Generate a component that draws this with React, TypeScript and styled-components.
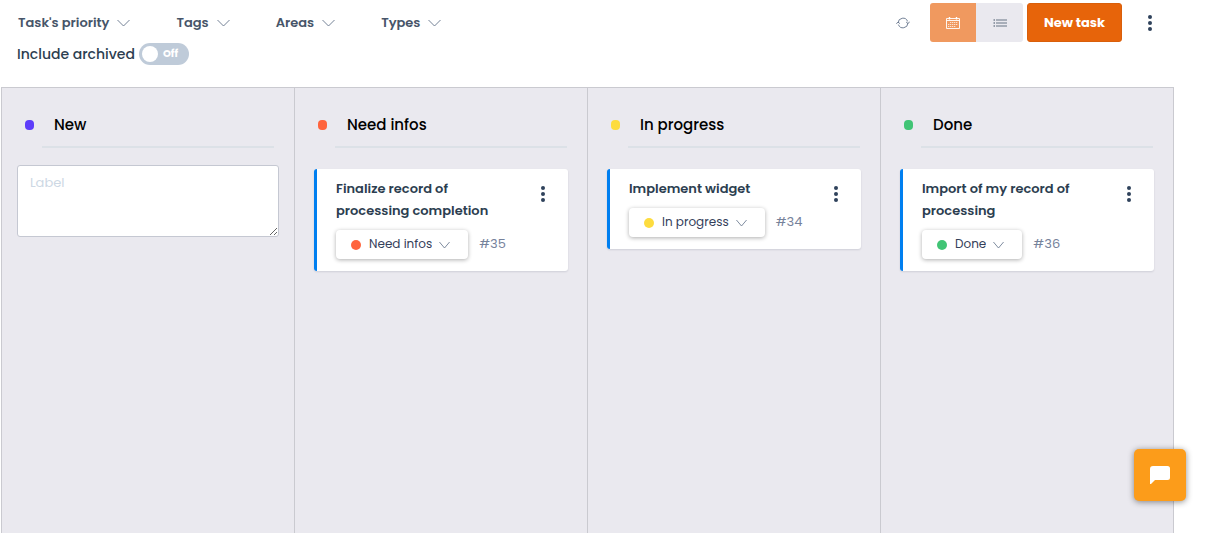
import React, { useState } from 'react';
import styled, { createGlobalStyle } from 'styled-components';

const GlobalStyle = createGlobalStyle`
  *, *::before, *::after { box-sizing: border-box; }
  body {
    margin: 0;
    background: #fff;
    color: #2c3e50;
    font-family: Poppins, Inter, "Liberation Sans", sans-serif;
    font-size: 13px;
  }
  button, select, textarea, input { font: inherit; color: inherit; }
  button { cursor: pointer; }
`;

const Page = styled.div`
  display: flex;
  flex-direction: column;
  min-height: 100vh;
  padding: 0 33px 0 1px;
`;

const Toolbar = styled.header`
  display: flex;
  justify-content: space-between;
  align-items: flex-start;
  min-height: 87px;
  padding: 3px 12px 0 16px;
`;

const FilterArea = styled.div`
  display: flex;
  flex-direction: column;
`;

const Filters = styled.nav`
  display: flex;
  align-items: center;
  gap: 45px;
  height: 39px;
`;

const FilterButton = styled.button`
  display: flex;
  align-items: center;
  gap: 8px;
  padding: 0 0 0 1px;
  border: 0;
  background: none;
  color: #475569;
  font-size: 13px;
  font-weight: 600;
  line-height: 20px;
  white-space: nowrap;
`;

const SwitchRow = styled.label`
  display: flex;
  align-items: center;
  align-self: flex-start;
  gap: 4px;
  color: #2c3e50;
  font-size: 14px;
  font-weight: 500;
  line-height: 24px;
  white-space: nowrap;
`;

const SwitchTrack = styled.span<{ $on: boolean }>`
  display: flex;
  flex-direction: ${(p) => (p.$on ? 'row-reverse' : 'row')};
  align-items: center;
  gap: 5px;
  width: 50px;
  height: 22px;
  padding: 0 3px;
  border-radius: 11px;
  background: ${(p) => (p.$on ? '#e7640a' : '#bfcbd9')};
  color: #fff;
  font-size: 10px;
  font-weight: 700;
`;

const SwitchInput = styled.input`
  appearance: none;
  width: 16px;
  height: 16px;
  margin: 0;
  border-radius: 50%;
  background: #fff;
  cursor: pointer;
`;

const Actions = styled.div`
  display: flex;
  align-items: center;
`;

const IconButton = styled.button`
  display: flex;
  align-items: center;
  justify-content: center;
  width: 24px;
  height: 24px;
  padding: 0;
  border: 0;
  background: none;
`;

const ViewSwitch = styled.div`
  display: flex;
  margin: 0 4px 0 15px;
  border-radius: 3px;
  overflow: hidden;
`;

const ViewButton = styled.button<{ $active?: boolean }>`
  display: flex;
  align-items: center;
  justify-content: center;
  width: ${(p) => (p.$active ? '46px' : '47px')};
  height: 39px;
  padding: 0;
  border: 0;
  background: ${(p) => (p.$active ? '#f0995f' : '#eae9ef')};
  color: ${(p) => (p.$active ? '#fff' : '#475569')};
`;

const NewTaskButton = styled.button`
  width: 95px;
  height: 39px;
  margin-right: 16px;
  padding: 0;
  border: 1px solid #d95f0b;
  border-radius: 3px;
  background: #e7640a;
  color: #fff;
  font-size: 13px;
  font-weight: 700;
`;

const Board = styled.main`
  display: grid;
  grid-template-columns: repeat(4, minmax(0, 1fr));
  flex: 1;
  border: solid #cacad0;
  border-width: 1px 1px 0 0;
  background: #eae9ef;
`;

const Column = styled.section`
  display: flex;
  flex-direction: column;
  border-left: 1px solid #cacad0;
  padding-top: 25px;
`;

const ColumnHead = styled.div`
  display: flex;
  align-items: center;
  gap: 20px;
  padding-left: 23px;
`;

const ColumnMark = styled.span<{ $color: string }>`
  width: 9px;
  height: 10px;
  border-radius: 4px;
  background: ${(p) => p.$color};
`;

const ColumnTitle = styled.h2`
  margin: 0;
  color: #000;
  font-size: 15px;
  font-weight: 500;
  line-height: 24px;
`;

const Rule = styled.hr`
  width: auto;
  height: 2px;
  margin: 9px 20px 21px 40px;
  border: 0;
  background: #dce1e7;
`;

const LabelField = styled.textarea`
  height: 72px;
  margin: -4px 15px 0;
  padding: 7px 12px;
  border: 1px solid #c5c8d2;
  border-radius: 3px;
  background: #fff;
  font-size: 13px;
  line-height: 20px;
  resize: vertical;
  &::placeholder { color: #cdd8e4; opacity: 1; }
`;

const Card = styled.article`
  display: flex;
  align-items: flex-start;
  justify-content: space-between;
  margin: 0 19px;
  padding: 9px 13px 12px 19px;
  border-left: 3px solid #007ff0;
  border-radius: 3px;
  background: #fff;
  box-shadow: 0 1px 2px rgba(40, 50, 80, 0.14);
`;

const CardBody = styled.div`
  display: flex;
  flex-direction: column;
  gap: 8px;
  max-width: 164px;
`;

const CardTitle = styled.h3`
  margin: 0;
  color: #2c3e50;
  font-size: 13px;
  font-weight: 600;
  line-height: 22px;
`;

const CardMeta = styled.div`
  display: flex;
  align-items: center;
  gap: 11px;
`;

const StatusBox = styled.label`
  display: flex;
  align-items: center;
  height: 29px;
  padding: 0 18px 0 15px;
  border-radius: 4px;
  background: #fff;
  box-shadow: 0 1px 4px rgba(0, 0, 0, 0.32);
`;

const StatusDot = styled.span<{ $color: string }>`
  width: 10px;
  height: 10px;
  margin-right: 8px;
  border-radius: 50%;
  background: ${(p) => p.$color};
`;

const StatusSelect = styled.select`
  appearance: none;
  field-sizing: content;
  margin-right: 7px;
  padding: 0 0 2px;
  border: 0;
  background: none;
  color: #34405a;
  font-size: 12px;
  line-height: 20px;
`;

const TaskNumber = styled.span`
  padding-bottom: 2px;
  color: #76829b;
  font-size: 13px;
  line-height: 20px;
`;

const CardMenu = styled(IconButton)`
  margin-top: 4px;
`;

const ChatButton = styled.button`
  position: fixed;
  right: 21px;
  bottom: 32px;
  display: flex;
  align-items: center;
  justify-content: center;
  width: 52px;
  height: 52px;
  padding: 0;
  border: 0;
  border-radius: 5px;
  background: #fc9c1a;
  box-shadow: 0 1px 6px rgba(0, 0, 0, 0.45);
`;

const Chevron = ({ width = 13 }: { width?: number }) => (
  <svg width={width} height="8" viewBox="0 0 13 8" fill="none" stroke="#64748b" strokeWidth=".9" preserveAspectRatio="none" aria-hidden="true">
    <path d="M.5 1 6.500 7l6-6" />
  </svg>
);

const Kebab = () => (
  <svg width="4" height="16" viewBox="0 0 4 16" fill="#2f425b" aria-hidden="true">
    <circle cx="2" cy="2" r="2" />
    <circle cx="2" cy="8" r="2" />
    <circle cx="2" cy="14" r="2" />
  </svg>
);

const RefreshIcon = () => (
  <svg width="14" height="12" viewBox="0 0 14 12" fill="none" stroke="#64748b" strokeWidth=".9" aria-hidden="true">
    <path d="M2.100 6A4.900 4.900 0 0 1 11.600 4.400M11.900 6a4.900 4.900 0 0 1-9.500 1.600" />
    <path d="M.3 6.600 2.100 5.200 3.900 6.600M10.100 5l1.800 1.400L13.700 5" />
  </svg>
);

const CalendarIcon = () => (
  <svg width="14" height="12" viewBox="0 0 14 12" fill="none" stroke="currentColor" aria-hidden="true">
    <path d="M.5 1.500h13v10H.5zM.5 3.500h13" strokeWidth=".9" />
    <path d="M3.500 0v2.500M10.500 0v2.500" strokeWidth="1.400" />
    <path d="M4 5.500h8M2 7.500h10M2 9.500h8" strokeDasharray="1.300 .7" opacity=".7" />
  </svg>
);

const ListIcon = () => (
  <svg width="14" height="8" viewBox="0 0 14 8" stroke="currentColor" aria-hidden="true">
    <path d="M3 1h11M3 4h11M3 7h11" strokeWidth=".8" />
    <path d="M.5 1H2M.5 4H2M.5 7H2" strokeWidth="1.500" opacity=".7" />
  </svg>
);

const ChatIcon = () => (
  <svg width="20" height="18" viewBox="0 0 20 18" fill="#fff" aria-hidden="true">
    <path d="M3 0h14.500a2.500 2.500 0 0 1 2.500 2.500v9a2.500 2.500 0 0 1-2.500 2.500H5L1 18H0V3a3 3 0 0 1 3-3z" />
  </svg>
);

const filters = ["Task's priority", 'Tags', 'Areas', 'Types'];

const columns = [
  { name: 'New', color: '#5e3dfa', tasks: [] },
  { name: 'Need infos', color: '#ff643d', tasks: [{ id: 35, title: 'Finalize record of processing completion' }] },
  { name: 'In progress', color: '#fddc3f', tasks: [{ id: 34, title: 'Implement widget' }] },
  { name: 'Done', color: '#41c475', tasks: [{ id: 36, title: 'Import of my record of processing' }] },
];

function TaskCard({ id, title, initial }: { id: number; title: string; initial: string }) {
  const [status, setStatus] = useState(initial);
  const color = columns.find((c) => c.name === status)!.color;
  return (
    <Card>
      <CardBody>
        <CardTitle>{title}</CardTitle>
        <CardMeta>
          <StatusBox>
            <StatusDot $color={color} />
            <StatusSelect aria-label="Status" value={status} onChange={(e) => setStatus(e.target.value)}>
              {columns.map((c) => (
                <option key={c.name}>{c.name}</option>
              ))}
            </StatusSelect>
            <Chevron width={11} />
          </StatusBox>
          <TaskNumber>#{id}</TaskNumber>
        </CardMeta>
      </CardBody>
      <CardMenu type="button" aria-label="Task menu">
        <Kebab />
      </CardMenu>
    </Card>
  );
}

export default function App() {
  const [archived, setArchived] = useState(false);
  return (
    <>
      <GlobalStyle />
      <Page>
        <Toolbar>
          <FilterArea>
            <Filters>
              {filters.map((f) => (
                <FilterButton key={f} type="button" aria-haspopup="listbox">
                  {f}
                  <Chevron />
                </FilterButton>
              ))}
            </Filters>
            <SwitchRow>
              Include archived
              <SwitchTrack $on={archived}>
                <SwitchInput
                  type="checkbox"
                  role="switch"
                  checked={archived}
                  onChange={(e) => setArchived(e.target.checked)}
                />
                {archived ? 'On' : 'Off'}
              </SwitchTrack>
            </SwitchRow>
          </FilterArea>
          <Actions>
            <IconButton type="button" aria-label="Refresh">
              <RefreshIcon />
            </IconButton>
            <ViewSwitch>
              <ViewButton type="button" $active aria-label="Board view">
                <CalendarIcon />
              </ViewButton>
              <ViewButton type="button" aria-label="List view">
                <ListIcon />
              </ViewButton>
            </ViewSwitch>
            <NewTaskButton type="button">New task</NewTaskButton>
            <IconButton type="button" aria-label="More actions">
              <Kebab />
            </IconButton>
          </Actions>
        </Toolbar>
        <Board>
          {columns.map((c) => (
            <Column key={c.name}>
              <ColumnHead>
                <ColumnMark $color={c.color} />
                <ColumnTitle>{c.name}</ColumnTitle>
              </ColumnHead>
              <Rule />
              {c.name === 'New' && <LabelField placeholder="Label" aria-label="Label" />}
              {c.tasks.map((t) => (
                <TaskCard key={t.id} id={t.id} title={t.title} initial={c.name} />
              ))}
            </Column>
          ))}
        </Board>
      </Page>
      <ChatButton type="button" aria-label="Open chat">
        <ChatIcon />
      </ChatButton>
    </>
  );
}
